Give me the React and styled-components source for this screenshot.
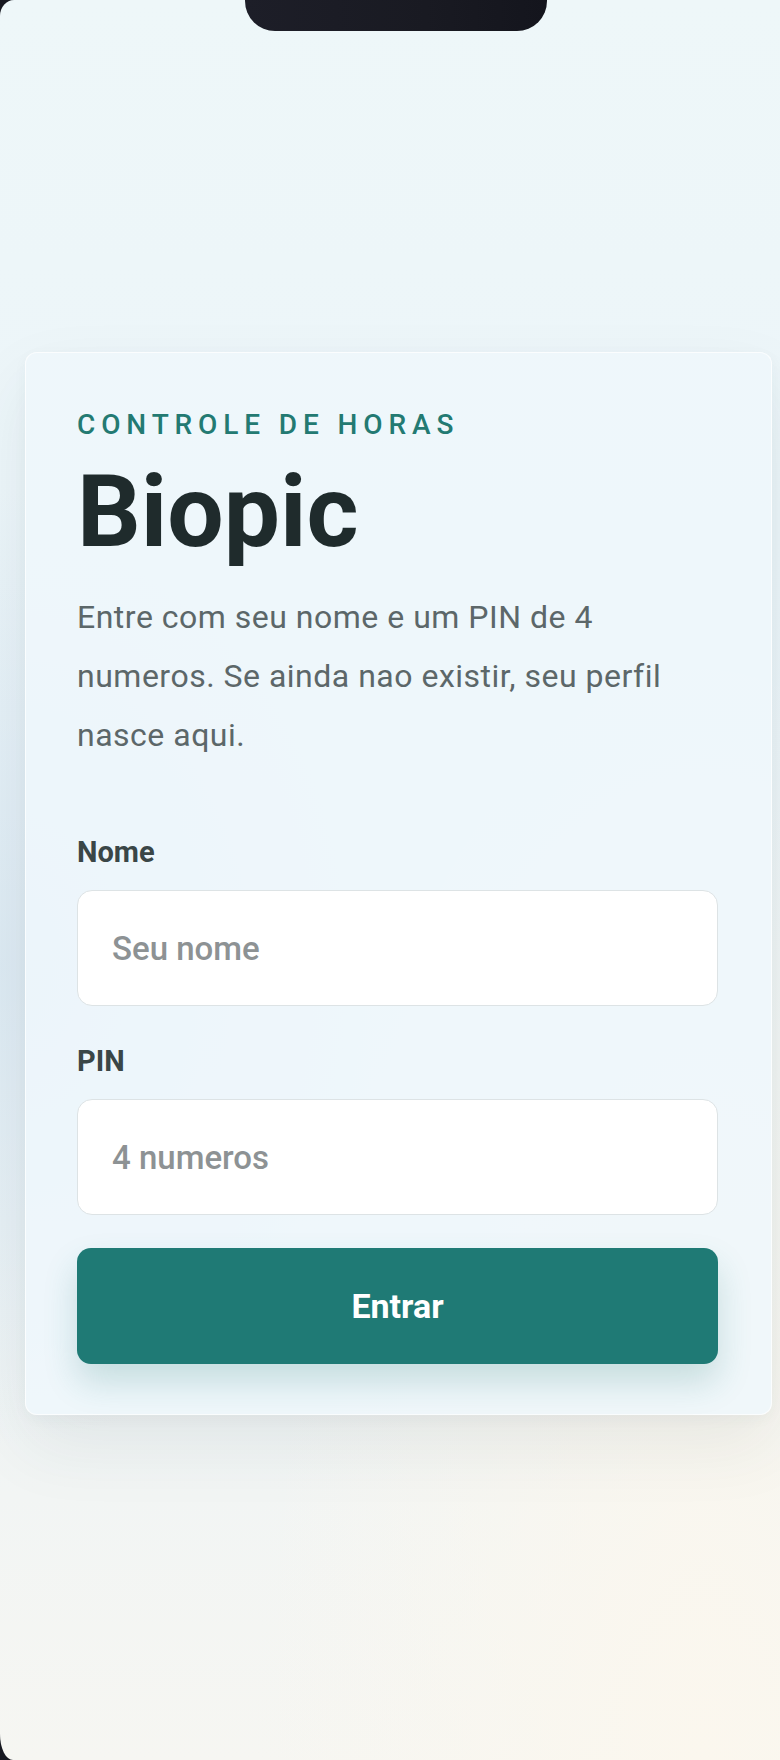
import styled, { createGlobalStyle } from "styled-components";

const Global = createGlobalStyle`
  html, body {
    margin: 0;
    padding: 0;
    background: #161820;
  }
  * {
    box-sizing: border-box;
  }
`;

const Screen = styled.div`
  position: relative;
  min-height: 1760px;
  padding: 352px 8px 0 25px;
  border-radius: 14px 0 0 13px / 16px 0 0 26px;
  overflow: hidden;
  font-family: Roboto, "Liberation Sans", sans-serif;
  background:
    radial-gradient(ellipse at 90% 100%, #fbf7ee 0%, rgba(251, 247, 238, 0) 45%),
    radial-gradient(ellipse at 0% 55%, rgba(214, 229, 240, 0.7) 0%, rgba(214, 229, 240, 0) 35%),
    linear-gradient(180deg, #eef7f9 0%, #ebf4f9 45%, #eef4f6 70%, #f6f6f2 100%);
`;

const Notch = styled.div`
  position: absolute;
  top: 0;
  left: 245px;
  width: 302px;
  height: 31px;
  background: linear-gradient(90deg, #1d1e28, #191a22 60%, #14151d);
  border-radius: 0 0 30px 30px;
`;

const Card = styled.section`
  display: flex;
  flex-direction: column;
  padding: 56px 53px 50px 51px;
  border-radius: 12px;
  background: rgba(238, 247, 251, 0.85);
  border: 1px solid rgba(255, 255, 255, 0.7);
  box-shadow: 0 30px 70px rgba(40, 70, 80, 0.08), 0 4px 14px rgba(40, 70, 80, 0.04);
`;

const Eyebrow = styled.span`
  font-size: 28px;
  line-height: 32px;
  font-weight: 500;
  letter-spacing: 0.21em;
  color: #237a72;
`;

const Title = styled.h1`
  margin: 15px 0 0;
  font-size: 100px;
  line-height: 112px;
  font-weight: 700;
  color: #1f2b2c;
`;

const Lead = styled.p`
  margin: 20px 0 0;
  max-width: 610px;
  font-size: 32px;
  line-height: 59px;
  letter-spacing: 0.5px;
  color: #5c6769;
`;

const Form = styled.form`
  display: flex;
  flex-direction: column;
  margin-top: 70px;
`;

const Label = styled.label`
  font-size: 29px;
  line-height: 34px;
  font-weight: 700;
  color: #3a4647;
  margin-top: ${(p) => (p.$first ? "0" : "38px")};
`;

const Field = styled.input`
  margin-top: 21px;
  height: 116px;
  padding: 0 34px;
  border: 1px solid #dde3e5;
  border-radius: 15px;
  background: #ffffff;
  font-family: Roboto, "Liberation Sans", sans-serif;
  font-size: 33px;
  font-weight: 500;
  color: #2b3536;
  outline: none;

  &::placeholder {
    color: #8d9294;
  }
`;

const Submit = styled.button`
  margin-top: 33px;
  height: 116px;
  border: none;
  border-radius: 14px;
  background: #1f7a75;
  color: #ffffff;
  font-family: Roboto, "Liberation Sans", sans-serif;
  font-size: 34px;
  font-weight: 700;
  box-shadow: 0 18px 34px rgba(31, 122, 117, 0.2);
  cursor: pointer;
`;

export default function App() {
  return (
    <>
      <Global />
      <Screen>
        <Notch />
        <Card>
          <Eyebrow>CONTROLE DE HORAS</Eyebrow>
          <Title>Biopic</Title>
          <Lead>
            Entre com seu nome e um PIN de 4 numeros. Se ainda nao existir, seu
            perfil nasce aqui.
          </Lead>
          <Form onSubmit={(e) => e.preventDefault()}>
            <Label $first htmlFor="nome">
              Nome
            </Label>
            <Field id="nome" type="text" placeholder="Seu nome" />
            <Label htmlFor="pin">PIN</Label>
            <Field id="pin" type="password" inputMode="numeric" placeholder="4 numeros" />
            <Submit type="submit">Entrar</Submit>
          </Form>
        </Card>
      </Screen>
    </>
  );
}
